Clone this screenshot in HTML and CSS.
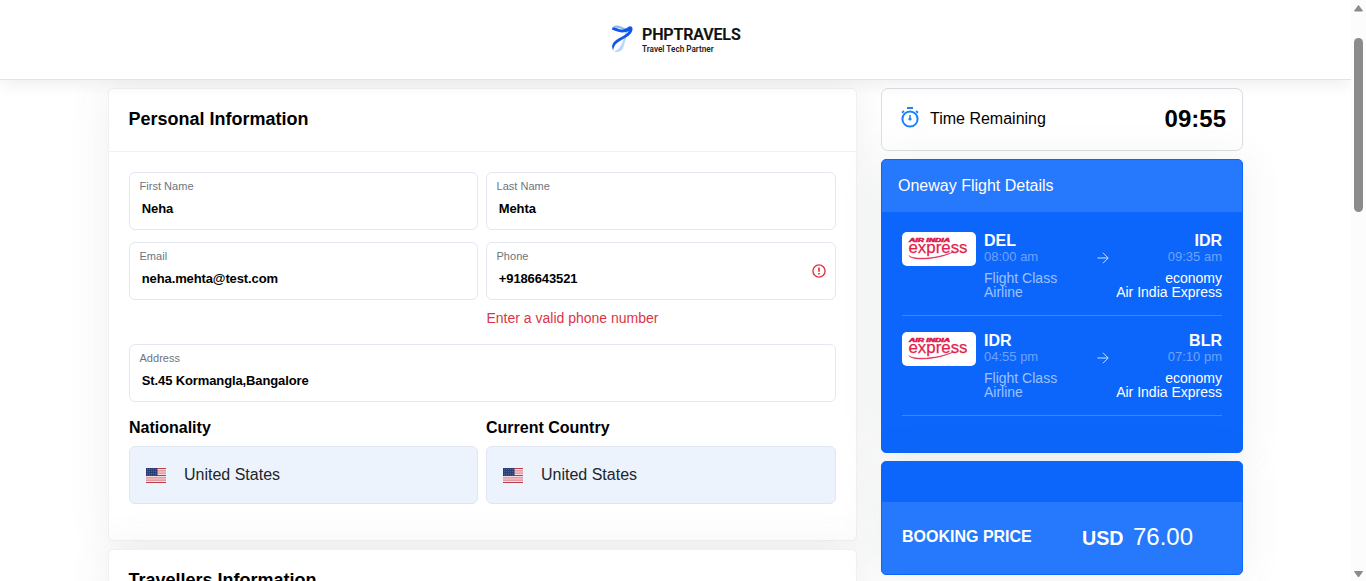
FILE: index.html
```html
<!DOCTYPE html>
<html lang="en">
<head>
<meta charset="utf-8">
<title>PHPTRAVELS</title>
<link rel="stylesheet" href="styles.css">
</head>
<body>
<svg width="0" height="0" class="defs">
  <defs>
    <symbol id="flag" viewBox="0 0 20 15">
      <rect width="20" height="15" fill="#f0c8cf"/>
      <path d="M0 .5h20M0 7.5h20M0 14.5h20" stroke="#bd3d44"/>
      <path d="M0 2.8h20M0 5.2h20M0 9.8h20M0 12.2h20" stroke="#d8808b" stroke-width=".9"/>
      <path d="M0 1.6h20M0 6.4h20M0 8.6h20M0 13.5h20" stroke="#f8e6e9" stroke-width=".7"/>
      <rect width="11.5" height="8" fill="#2b3f75"/>
      <path d="M1 1.5h10M1 3.5h10M1 5.5h10M1 7h10" stroke="#62719a" stroke-width=".7" stroke-dasharray="1 1"/>
    </symbol>
    <symbol id="express" viewBox="0 0 74 34">
      <text x="7" y="10.3" font-family="Liberation Sans, Arial, sans-serif" font-size="4.8" font-weight="bold" font-style="italic" fill="#d81f4d" stroke="#d81f4d" stroke-width=".5" textLength="41" lengthAdjust="spacingAndGlyphs">AIR INDIA</text>
      <text x="6.5" y="20.800" font-family="Liberation Sans, Arial, sans-serif" font-size="16.5" fill="#e31e4c" stroke="#e31e4c" stroke-width=".25" textLength="59" lengthAdjust="spacingAndGlyphs">express</text>
      <path d="M7 23.5c4 4.500 28 3.500 44-3.500-15 8-42 9-44 3.500z" fill="#e31e4c" stroke="#e31e4c" stroke-width=".5"/>
    </symbol>
    <symbol id="arrow" viewBox="0 0 12 12">
      <path d="M.5 6h10.500M6 .8 11.200 6 6 11.200" fill="none" stroke="#d2e1ff" stroke-width="1"/>
    </symbol>
  </defs>
</svg>
<header class="topbar">
  <div class="brand">
    <svg class="brand-mark" width="25" height="32" viewBox="0 0 25 32">
      <path d="M12 6c4.500 3 3 9 .5 14-1.500 4-4 8-8.500 9.500 4 1.500 8 0 9.500-4.500C15.500 18 18.500 10 16.500 7z" fill="#bcd6fb"/>
      <path d="M2 7.500C1.500 4 7 2.500 11 4.500c2 1 4 1.800 6 1.500-4 2.500-9-.5-12-.5-1.500 0-2.500.8-3 2z" fill="#8db8fa"/>
      <path d="M1.800 7.500C2.500 4.800 5 5.500 7.500 6.500c4.500 1.800 7.500.8 11-1.800 2.200-1.500 4.800.3 3.900 3.500-1.400 5-6 7-10.900 9.800C7 20.500 4 23 3.200 28.200 1.300 25 2 21.500 5 19c4-3.500 11-5.500 14-10-4.500 2-9 1.800-12.500.3-2-.9-3.700-1.600-4.700-1.800z" fill="#0f57ea"/>
    </svg>
    <div class="brand-text">
      <div class="brand-name">PHPTRAVELS</div>
      <div class="brand-tag">Travel Tech Partner</div>
    </div>
  </div>
</header>
<main class="layout">
  <section class="main-col">
    <div class="card personal">
      <h3 class="card-title">Personal Information</h3>
      <div class="form">
        <div class="field"><label>First Name</label><b>Neha</b></div>
        <div class="field"><label>Last Name</label><b>Mehta</b></div>
        <div class="field"><label>Email</label><b>neha.mehta@test.com</b></div>
        <div class="field invalid"><label>Phone</label><b>+9186643521</b>
          <svg class="alert" width="14" height="14" viewBox="0 0 14 14" fill="none" stroke="#dc3545"><circle cx="7" cy="7" r="6.100" stroke-width="1.400"/><path d="M7 3.500v4.300M7 9v1.500" stroke-width="1.700"/></svg>
        </div>
        <div class="error">Enter a valid phone number</div>
        <div class="field wide"><label>Address</label><b class="address">St.45 Kormangla,Bangalore</b></div>
        <div class="country"><h4>Nationality</h4><div class="select"><svg width="20" height="15"><use href="#flag"/></svg><span>United States</span></div></div>
        <div class="country"><h4>Current Country</h4><div class="select"><svg width="20" height="15"><use href="#flag"/></svg><span>United States</span></div></div>
      </div>
    </div>
    <div class="card"><h3 class="card-title travellers">Travellers Information</h3></div>
  </section>
  <aside class="side-col">
    <div class="timer">
      <svg width="18" height="21" viewBox="0 0 18 21" fill="none" stroke="#1a80ff"><circle cx="9" cy="12" r="7.600" stroke-width="2"/><path d="M6 1h6" stroke-width="2"/><path d="M1 5.700 3 4M17 5.700 15 4" stroke-width="1.800"/><path d="M9 8v3" stroke-width="1.500"/><circle cx="9" cy="12" r="1.600" fill="#1a80ff" stroke="none"/></svg>
      <span class="timer-label">Time Remaining</span>
      <strong>09:55</strong>
    </div>
    <div class="flight">
      <div class="flight-head">Oneway Flight Details</div>
      <div class="legs">
        <div class="leg">
          <svg class="airline" width="74" height="34"><use href="#express"/></svg>
          <div class="from"><b>DEL</b><time>08:00 am</time><p>Flight Class<br>Airline</p></div>
          <svg class="arrow" width="12" height="12"><use href="#arrow"/></svg>
          <div class="to"><b>IDR</b><time>09:35 am</time><p>economy<br>Air India Express</p></div>
        </div>
        <div class="leg">
          <svg class="airline" width="74" height="34"><use href="#express"/></svg>
          <div class="from"><b>IDR</b><time>04:55 pm</time><p>Flight Class<br>Airline</p></div>
          <svg class="arrow" width="12" height="12"><use href="#arrow"/></svg>
          <div class="to"><b>BLR</b><time>07:10 pm</time><p>economy<br>Air India Express</p></div>
        </div>
      </div>
    </div>
    <div class="price">
      <div class="price-row"><span class="price-label">BOOKING PRICE</span><span class="currency">USD</span><span class="amount">76.00</span></div>
    </div>
  </aside>
</main>
<div class="scrollbar">
  <svg width="15" height="12" viewBox="0 0 15 12"><path d="M3.500 11 7.500 5.500l4 5.500z" fill="#8b8b8b" stroke="#8b8b8b" stroke-linejoin="round"/></svg>
  <div class="thumb"></div>
  <svg class="down" width="15" height="12" viewBox="0 0 15 12"><path d="M3.500 1.500 7.500 7l4-5.500z" fill="#8b8b8b" stroke="#8b8b8b" stroke-linejoin="round"/></svg>
</div>
</body>
</html>
```
FILE: styles.css
```css
* { box-sizing: border-box; }
html, body { height: 100%; overflow: hidden; }
body { margin: 0; background: #fff; color: #000; font-family: "Liberation Sans", Arial, sans-serif; padding-right: 15px; }
.defs { position: absolute; }
svg { display: block; flex: none; }
h3, h4, p { margin: 0; }

.topbar { position: relative; z-index: 2; height: 80px; background: #fff; border-bottom: 1px solid #e3e3e3; box-shadow: 0 4px 16px rgba(0, 0, 0, .07); padding: 22px 0 0 610px; }
.brand { display: flex; gap: 7px; }
.brand-text { font-family: Roboto, sans-serif; padding-top: 4px; }
.brand-name { font-size: 16px; line-height: 18px; font-weight: 600; letter-spacing: -.12px; color: #111; -webkit-text-stroke: .2px #111; }
.brand-tag { font-size: 8.200px; line-height: 11px; font-weight: 600; color: #222; }

.layout { display: flex; gap: 24px; padding: 8px 0 0 108px; }
.main-col { width: 749px; display: flex; flex-direction: column; gap: 8px; }
.card { height: 100px; background: #fff; border: 1px solid #f0f1f2; border-radius: 5px; box-shadow: 0 0 40px rgba(82, 95, 90, .1); flex: none; }
.personal { height: 453px; }
.card-title { height: 63px; border-bottom: 1px solid #f0f1f2; font-size: 18px; line-height: 21px; padding: 20px 0 0 19.500px; }
.travellers { border: 0; }
.form { display: grid; grid-template-columns: 349px 350px; column-gap: 8px; padding: 20px 0 0 20px; }
.field { position: relative; height: 58px; margin-bottom: 12px; border: 1px solid #e2e7f1; border-radius: 6px; padding: 7px 0 0 9.500px; }
.field label { display: block; font-size: 11px; line-height: 13px; letter-spacing: .03px; color: #6c757d; }
.field b { display: block; font-size: 13px; line-height: 16px; letter-spacing: -.12px; padding: 8px 0 0 2.300px; }
.invalid .alert { position: absolute; right: 9px; top: 21px; }
.error { grid-column: 2; color: #dc3545; font-size: 14px; line-height: 18px; height: 32px; margin-top: -3px; padding-left: .5px; }
.wide { grid-column: 1 / 3; margin-top: 3px; margin-bottom: 17px; }
h4 { font-size: 16px; line-height: 18px; margin-bottom: 9px; }
.select { height: 58px; display: flex; align-items: center; gap: 18px; padding-left: 16px; border: 1px solid #dfe6f0; border-radius: 6px; background: #ecf3fc; color: #212529; font-size: 16px; }

.side-col { width: 362px; display: flex; flex-direction: column; gap: 8px; }
.timer { height: 63px; display: flex; align-items: center; gap: 11px; padding: 0 16px 0 19px; background: #fff; border: 1px solid #d9dfe4; border-radius: 7px; }
.timer svg { margin-top: -5px; }
.timer-label { flex: 1; font-size: 16px; line-height: 18px; margin-top: -2px; }
.timer strong { font-size: 24px; line-height: 28px; margin-top: -2px; }
.flight, .price { background: #0c66fc; border: 1px solid #0c66fc; border-radius: 5px; color: #fff; box-shadow: 0 0 40px rgba(82, 95, 90, .1); flex: none; overflow: hidden; }
.flight { height: 294px; }
.flight-head { height: 52px; background: #2678fc; padding: 17px 16px; font-size: 16px; line-height: 18px; }
.legs { padding: 20px 20px 0; }
.leg { height: 84px; margin-bottom: 16px; border-bottom: 1px solid #3d85fd; display: flex; }
.airline { background: #fff; border-radius: 5px; margin-right: 8px; }
.from { width: 113px; }
.arrow { margin: 20px 0 0; }
.to { flex: 1; text-align: right; }
.leg b { display: block; font-size: 16px; line-height: 16px; padding-top: 1px; }
.leg time { display: block; font-size: 13px; line-height: 16px; color: #6da3fd; }
.leg p { font-size: 14px; line-height: 14px; padding-top: 6px; white-space: nowrap; }
.from p { color: #9ec2fe; }
.price { height: 114px; padding-top: 40px; }
.price-row { height: 72px; background: #2678fc; display: flex; align-items: center; padding: 0 0 3px 20px; }
.price-label { width: 180px; font-size: 16px; font-weight: bold; }
.currency { width: 51px; font-size: 19.700px; font-weight: bold; padding-top: 3px; }
.amount { font-size: 24px; }

.scrollbar { position: absolute; z-index: 3; right: 0; top: 0; width: 15px; height: 581px; background: #fcfcfc; }
.thumb { width: 9px; height: 174px; margin: 26px 0 0 3px; border-radius: 5px; background: #8b8b8b; }
.down { margin-top: 358px; }
```
